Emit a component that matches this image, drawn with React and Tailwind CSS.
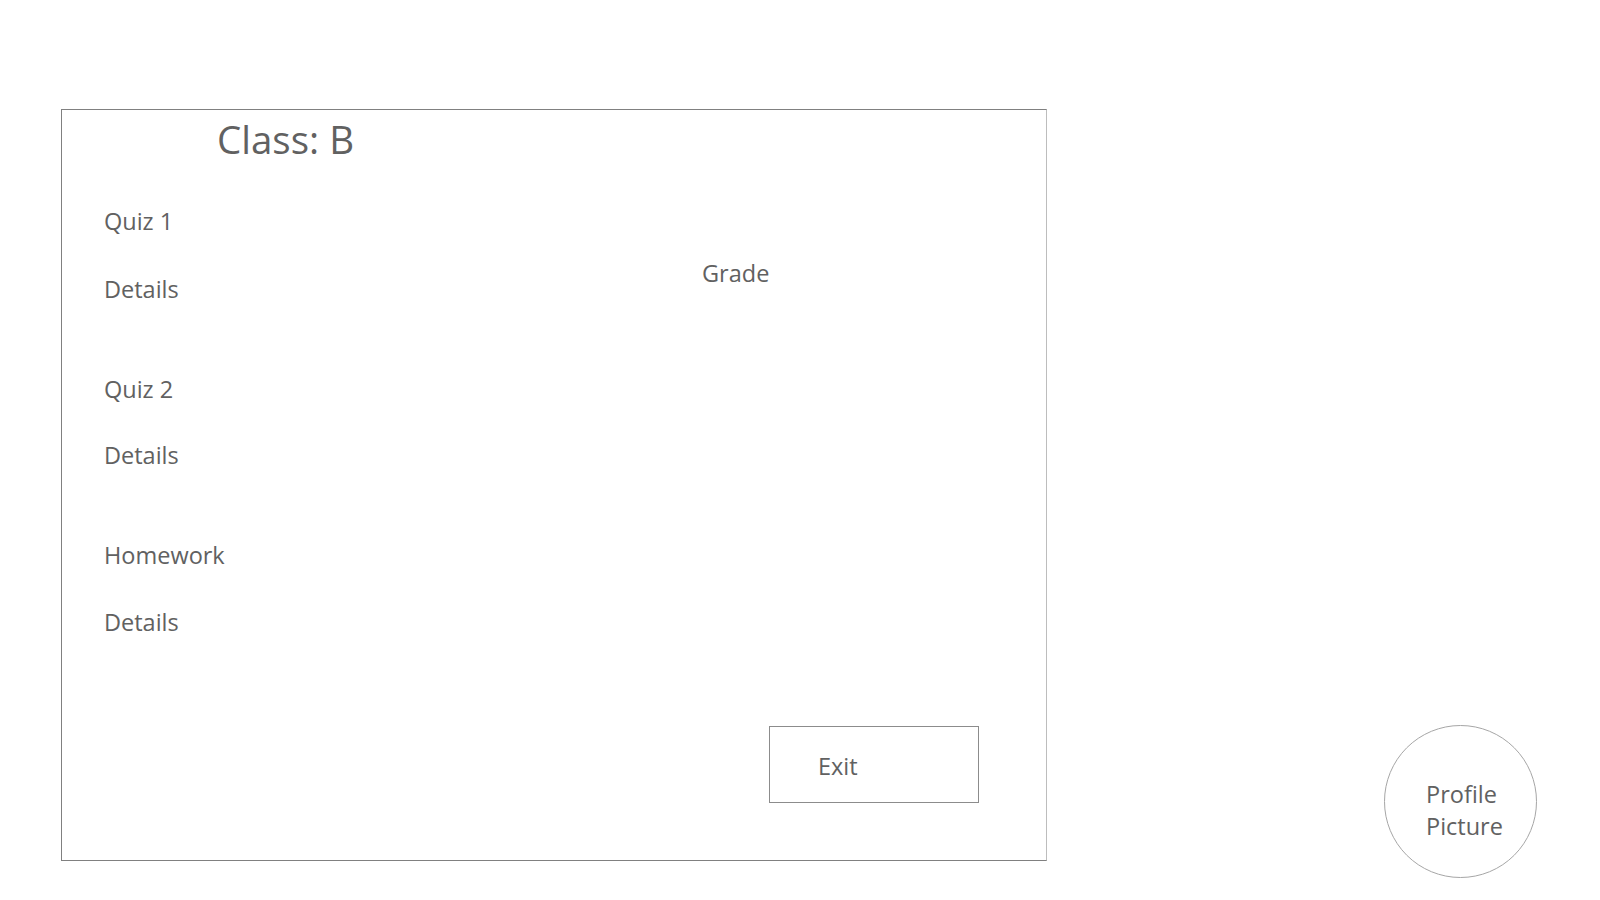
export default function App() {
  const font = { fontFamily: '"Open Sans", "Noto Sans", sans-serif' };
  const item = "text-[23.5px] leading-[30px] text-[#616161]";
  return (
    <div className="w-[1600px] h-[900px] bg-white overflow-hidden" style={font}>
      <div className="flex items-start pl-[61px] pt-[109px]">
        <div className="w-[986px] h-[752px] border border-[#808080] border-r-[#bdbdbd] flex flex-col">
          <div className="pt-[4px] pl-[155px] text-[38.5px] leading-[50px] text-[#616161]">Class: B</div>
          <div className="flex mt-[42px]">
            <div className="w-[640px] pl-[42px] flex flex-col">
              <div className={item}>Quiz 1</div>
              <div className={`${item} mt-[38px]`}>Details</div>
              <div className={`${item} mt-[70px]`}>Quiz 2</div>
              <div className={`${item} mt-[36px]`}>Details</div>
              <div className={`${item} mt-[70px]`}>Homework</div>
              <div className={`${item} mt-[37px]`}>Details</div>
            </div>
            <div className={`${item} mt-[52px]`}>Grade</div>
          </div>
          <div className="flex justify-end pr-[67px] mt-[89px]">
            <div className="w-[210px] h-[77px] border border-[#8c8c8c] pl-[48px] pt-[24px]">
              <div className={item}>Exit</div>
            </div>
          </div>
        </div>
        <div className="ml-[337px] mt-[616px] w-[153px] h-[153px] rounded-full border border-[#a6a6a6] flex flex-col items-start justify-center pl-[41px] pt-[17px]">
          <div className="text-[23.5px] leading-[32px] text-[#616161]">Profile</div>
          <div className="text-[23.5px] leading-[32px] text-[#616161]">Picture</div>
        </div>
      </div>
    </div>
  );
}
